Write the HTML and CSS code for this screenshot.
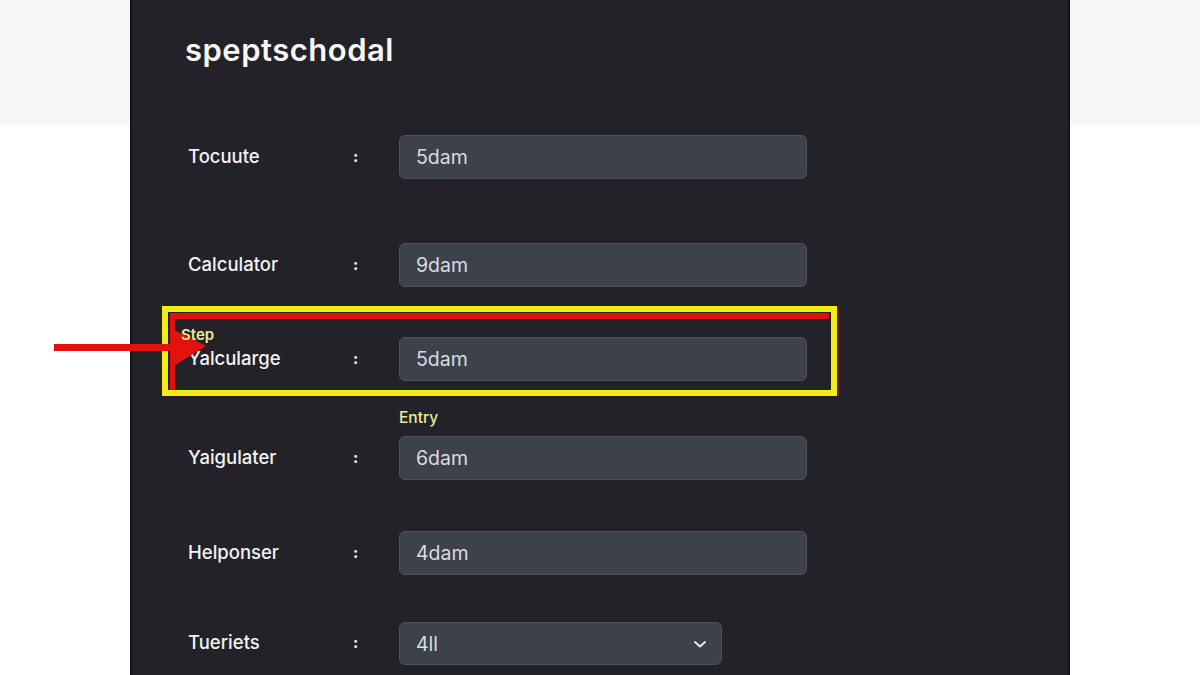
FILE: index.html
```html
<!DOCTYPE html>
<html lang="en">
<head>
<meta charset="utf-8">
<title>speptschodal</title>
<link rel="stylesheet" href="styles.css">
</head>
<body>
<main class="panel">
  <h1 class="title">speptschodal</h1>
  <form class="form">
    <div class="row row-1">
      <span class="label">Tocuute</span>
      <span class="colon">:</span>
      <div class="field">5dam</div>
    </div>
    <div class="row row-2">
      <span class="label">Calculator</span>
      <span class="colon">:</span>
      <div class="field">9dam</div>
    </div>
    <div class="highlight">
      <span class="step-tag">Step</span>
      <svg class="pointer" width="170" height="44" viewBox="0 0 170 44" aria-hidden="true">
        <rect x="0" y="17" width="132" height="7" fill="#e3120c"/>
        <polygon points="118,2 152,19 118,40" fill="#e3120c"/>
      </svg>
      <div class="highlight-inner">
        <div class="row">
          <span class="label">Yalcularge</span>
          <span class="colon">:</span>
          <div class="field">5dam</div>
        </div>
      </div>
    </div>
    <div class="entry">Entry</div>
    <div class="row row-4">
      <span class="label">Yaigulater</span>
      <span class="colon">:</span>
      <div class="field">6dam</div>
    </div>
    <div class="row row-5">
      <span class="label">Helponser</span>
      <span class="colon">:</span>
      <div class="field">4dam</div>
    </div>
    <div class="row row-6">
      <span class="label">Tueriets</span>
      <span class="colon">:</span>
      <div class="field select">
        <span>4ll</span>
        <svg class="chevron" width="14" height="10" viewBox="0 0 14 10" aria-hidden="true">
          <path d="M2 3 L7 7.5 L12 3" fill="none" stroke="#e4e6ea" stroke-width="2" stroke-linecap="round" stroke-linejoin="round"/>
        </svg>
      </div>
    </div>
  </form>
</main>
</body>
</html>
```
FILE: styles.css
```css
html, body {
  margin: 0;
  padding: 0;
}

body {
  width: 1200px;
  height: 675px;
  overflow: hidden;
  background: linear-gradient(to bottom, #f6f6f6 0, #f6f6f6 125px, #ffffff 125px);
  font-family: Inter, "Noto Sans", sans-serif;
}

.panel {
  box-sizing: border-box;
  margin-left: 130px;
  width: 940px;
  height: 675px;
  background: #232228;
  border-left: 2px solid #141417;
  border-right: 2px solid #141417;
  position: relative;
}

.title {
  margin: 0;
  padding: 32px 0 0 53px;
  font-size: 31px;
  line-height: 36px;
  font-weight: 600;
  color: #f7f7f7;
  letter-spacing: 0.5px;
}

.form {
  display: flex;
  flex-direction: column;
}

.row {
  display: grid;
  grid-template-columns: 165px 46px 408px;
  align-items: center;
}

.row-1, .row-2, .row-4, .row-5, .row-6 {
  padding-left: 56px;
}

.row-1 { margin-top: 67px; }
.row-2 { margin-top: 64px; }
.row-4 { margin-top: 9px; }
.row-5 { margin-top: 51px; }
.row-6 { margin-top: 47px; }

.label {
  font-size: 18.5px;
  font-weight: 500;
  color: #f2f2f2;
  margin-top: -3px;
}

.colon {
  font-size: 15px;
  font-weight: 800;
  color: #e8e8e8;
  margin-top: -2px;
}

.field {
  box-sizing: border-box;
  height: 44px;
  padding: 0 16px;
  display: flex;
  align-items: center;
  background: #3d4149;
  border: 1px solid #4c5058;
  border-radius: 6px;
  font-size: 19.5px;
  color: #d9dbe0;
}

.select {
  width: 323px;
  height: 43px;
  justify-content: space-between;
  padding-right: 14px;
}

.chevron {
  display: block;
}

/* highlighted step around the third row */
.highlight {
  position: relative;
  box-sizing: border-box;
  margin: 19px 0 0 30px;
  width: 675px;
  border: 6px solid #f4ec16;
  box-shadow: 3px 0 2px -1px rgba(200, 20, 10, 0.5);
}

.highlight-inner {
  margin: 1px 2px 0 2px;
  border-top: 6px solid #dc130d;
  border-left: 5px solid #dc130d;
  padding: 18px 0 9px 13px;
}

.step-tag {
  position: absolute;
  left: 13px;
  top: 13px;
  font-size: 15px;
  font-weight: 600;
  color: #e9ea93;
  z-index: 2;
}

.pointer {
  position: absolute;
  left: -114px;
  top: 15px;
  z-index: 1;
}

.entry {
  margin: 13px 0 0 267px;
  font-size: 15.5px;
  font-weight: 500;
  line-height: 18px;
  color: #ecea9c;
}
```
